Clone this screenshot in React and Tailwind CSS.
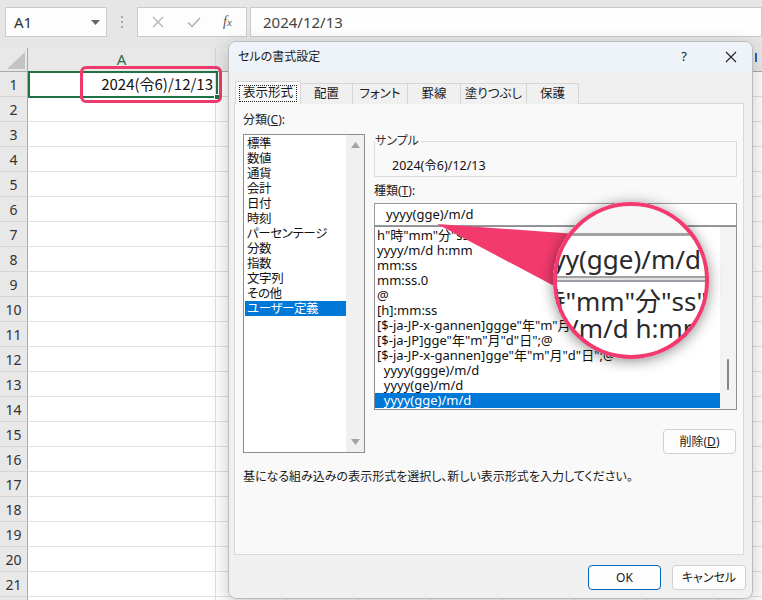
import React from "react";

const ui = "font-['Noto_Sans','Noto_Sans_CJK_JP',sans-serif] [font-feature-settings:'palt']";

const categories = [
  "標準",
  "数値",
  "通貨",
  "会計",
  "日付",
  "時刻",
  "パーセンテージ",
  "分数",
  "指数",
  "文字列",
  "その他",
  "ユーザー定義",
];

const formats = [
  'h"時"mm"分"ss"秒"',
  "yyyy/m/d h:mm",
  "mm:ss",
  "mm:ss.0",
  "@",
  "[h]:mm:ss",
  '[$-ja-JP-x-gannen]ggge"年"m"月"d"日";@',
  '[$-ja-JP]gge"年"m"月"d"日";@',
  '[$-ja-JP-x-gannen]gge"年"m"月"d"日";@',
  "  yyyy(ggge)/m/d",
  "  yyyy(ge)/m/d",
  "  yyyy(gge)/m/d",
];

const tabs = [
  { label: "表示形式", w: "w-[66px]" },
  { label: "配置", w: "w-[52px]" },
  { label: "フォント", w: "w-[55px]" },
  { label: "罫線", w: "w-[53px]" },
  { label: "塗りつぶし", w: "w-[66px]" },
  { label: "保護", w: "w-[52px]" },
];

const rows = Array.from({ length: 22 }, (_, i) => i + 1);
const colWidths = ["w-[188px]", "w-[72px]", "w-[72px]", "w-[72px]", "w-[72px]", "w-[72px]", "w-[72px]", "w-[72px]", "w-[72px]"];

function FormulaBar() {
  return (
    <div className="h-[48px] bg-[#e6e6e6] flex items-start pt-[7px] shrink-0">
      <div className="ml-[5px] w-[102px] h-[30px] bg-[#fdfdfd] border border-[#cacaca] flex items-center justify-between pl-[8px] pr-[6px]">
        <span className="text-[15px] text-[#333] font-['Noto_Sans',sans-serif]">A1</span>
        <svg width="9" height="5" viewBox="0 0 9 5">
          <path d="M0 0 L9 0 L4.5 5 Z" fill="#666" />
        </svg>
      </div>
      <div className="ml-[13px] w-[4px] h-[30px] flex flex-col items-center justify-center gap-[3px]">
        <span className="w-[2px] h-[2px] bg-[#a8a8a8]" />
        <span className="w-[2px] h-[2px] bg-[#a8a8a8]" />
        <span className="w-[2px] h-[2px] bg-[#a8a8a8]" />
      </div>
      <div className="ml-[13px] w-[110px] h-[30px] bg-[#fdfdfd] border border-[#cacaca] flex items-center pl-[13px] gap-[22px]">
        <svg width="14" height="14" viewBox="0 0 14 14">
          <path d="M2 2 L12 12 M12 2 L2 12" stroke="#b4b4b4" strokeWidth="1.3" />
        </svg>
        <svg width="14" height="14" viewBox="0 0 14 14">
          <path d="M1 7.5 L5 11.5 L13 3" stroke="#b4b4b4" strokeWidth="1.6" fill="none" />
        </svg>
        <span className="text-[14px] italic text-[#555] font-['Liberation_Serif',serif] leading-none">
          f<span className="text-[11px]">x</span>
        </span>
      </div>
      <div className="ml-[3px] flex-1 h-[30px] bg-[#fefefe] border border-[#cacaca] flex items-center pl-[12px]">
        <span className="text-[15px] text-[#444] font-['Noto_Sans',sans-serif]">2024/12/13</span>
      </div>
    </div>
  );
}

function Sheet() {
  return (
    <div className="flex flex-col font-['Noto_Sans',sans-serif]">
      <div className="flex h-[24px] bg-[#e8e8e8] border-b border-[#a9a9a9]">
        <div className="w-[28px] shrink-0 border-r border-[#a9a9a9] relative">
          <svg className="absolute right-[2px] bottom-[2px]" width="18" height="17" viewBox="0 0 18 17">
            <path d="M18 0 L18 17 L0 17 Z" fill="#c3c3c3" />
          </svg>
        </div>
        {colWidths.map((w, i) => (
          <div key={i} className={`${w} shrink-0 border-r border-[#d4d4d4] flex items-center justify-center text-[15px] text-[#2f6a48]`}>
            {i === 0 ? "A" : ""}
          </div>
        ))}
      </div>
      {rows.map((r) => (
        <div key={r} className="flex h-[25px]">
          <div className="w-[28px] shrink-0 bg-[#e8e8e8] border-r border-b border-r-[#a9a9a9] border-b-[#d4d4d4] flex items-center justify-center text-[14px] text-[#333]">
            {r}
          </div>
          {colWidths.map((w, i) => (
            <div key={i} className={`${w} shrink-0 border-r border-b border-[#e1e1e1]`} />
          ))}
        </div>
      ))}
    </div>
  );
}

function SelectedCell() {
  return (
    <>
      <div className="absolute left-[28px] top-[71px] w-[190px] h-[27px] border-2 border-[#217346] flex items-center justify-end pr-[3px]">
        <span className="text-[15px] text-[#111] font-['Noto_Sans_CJK_JP',sans-serif]">2024(令6)/12/13</span>
        <span className="absolute -right-[4px] -bottom-[4px] w-[6px] h-[6px] bg-[#217346] border border-white" />
      </div>
      <div className="absolute left-[80px] top-[66px] w-[142px] h-[37px] border-[3px] border-[#ef3a6c] rounded-[6px]" />
    </>
  );
}

function Button({ children, primary, className = "" }) {
  return (
    <div
      className={`h-[25px] bg-[#fdfdfd] rounded-[4px] border flex items-center justify-center text-[12px] text-[#1a1a1a] ${
        primary ? "border-[#0067c0]" : "border-[#d0d0d0]"
      } ${className}`}
    >
      {children}
    </div>
  );
}

function Dialog() {
  return (
    <div className={`absolute left-[228px] top-[41px] w-[525px] h-[558px] rounded-[8px] bg-[#f0f0f0] border border-[#bcbcbc] shadow-[0_6px_20px_rgba(0,0,0,0.22)] overflow-hidden flex flex-col ${ui}`}>
      <div className="h-[30px] bg-[#eef2f9] flex items-center pl-[9px] pr-[15px] shrink-0">
        <span className="text-[12px] text-[#1a1a1a] flex-1">セルの書式設定</span>
        <span className="text-[13px] text-[#222] mr-[38px]">?</span>
        <svg width="12" height="12" viewBox="0 0 12 12">
          <path d="M1 1 L11 11 M11 1 L1 11" stroke="#222" strokeWidth="1.1" />
        </svg>
      </div>

      <div className="flex flex-col pl-[5px] pr-[8px] pt-[9px]">
        {/* tabs */}
        <div className="flex h-[23px] items-end pl-[1px] relative z-10">
          {tabs.map((t, i) =>
            i === 0 ? (
              <div key={t.label} className={`${t.w} h-[23px] bg-[#f9f9f9] border border-b-0 border-[#d6d6d6] flex items-center justify-center`}>
                <span className="border border-dotted border-[#222] px-[3px] h-[17px] flex items-center text-[12.5px] text-[#1a1a1a]">
                  {t.label}
                </span>
              </div>
            ) : (
              <div key={t.label} className={`${t.w} h-[21px] bg-[#f0f0f0] border border-l-0 border-b-0 border-[#d6d6d6] flex items-center justify-center text-[12.5px] text-[#1a1a1a]`}>
                {t.label}
              </div>
            )
          )}
        </div>

        {/* panel */}
        <div className="-mt-px h-[452px] bg-[#f9f9f9] border border-[#d9d9d9] pl-[8px] pt-[8px] flex flex-col">
          <div className="flex">
            {/* category column */}
            <div className="w-[122px] flex flex-col">
              <div className="h-[16px] leading-[16px] text-[12px] text-[#1a1a1a]">
                分類(<span className="underline">C</span>):
              </div>
              <div className="mt-[6px] h-[319px] bg-white border border-[#8d8d96] flex">
                <div className="flex-1 flex flex-col pt-px pl-px">
                  {categories.map((c, i) => (
                    <div
                      key={c}
                      className={`h-[15px] leading-[15px] pl-[2px] text-[12.5px] tracking-[-0.4px] ${
                        i === categories.length - 1 ? "bg-[#0078d7] text-white" : "text-[#111]"
                      }`}
                    >
                      {c}
                    </div>
                  ))}
                </div>
                <div className="w-[18px] bg-[#f0f0f0] flex flex-col items-center justify-between py-[7px]">
                  <svg width="9" height="6" viewBox="0 0 9 6">
                    <path d="M0 6 L4.5 0 L9 6 Z" fill="#a3a3a3" />
                  </svg>
                  <svg width="9" height="6" viewBox="0 0 9 6">
                    <path d="M0 0 L9 0 L4.5 6 Z" fill="#a3a3a3" />
                  </svg>
                </div>
              </div>
            </div>

            {/* right column */}
            <div className="ml-[9px] w-[363px] flex flex-col">
              <div className="mt-[29px] h-[36px] border border-[#dcdcdc] relative pl-[17px] pt-[10px]">
                <span className="absolute -top-[9px] left-0 bg-[#f9f9f9] pr-[2px] text-[12px] leading-[16px] text-[#333]">サンプル</span>
                <span className="text-[12.5px] leading-[18px] text-[#111]">2024(令6)/12/13</span>
              </div>
              <div className="mt-[6px] h-[16px] leading-[16px] text-[12px] text-[#1a1a1a]">
                種類(<span className="underline">T</span>):
              </div>
              <div className="mt-[4px] h-[23px] bg-white border border-[#9a9a9a] flex items-center pl-[11px] text-[13px] text-[#111] whitespace-pre">
                yyyy(gge)/m/d
              </div>
              <div className="h-[184px] bg-white border border-[#8d8d96] flex">
                <div className="flex-1 flex flex-col pt-px">
                  {formats.map((f, i) => (
                    <div
                      key={f}
                      className={`h-[15px] leading-[15px] pl-[2px] text-[13px] whitespace-pre ${
                        i === formats.length - 1 ? "bg-[#0078d7] text-white" : "text-[#111]"
                      }`}
                    >
                      {f}
                    </div>
                  ))}
                </div>
                <div className="w-[16px] bg-[#f3f3f3] relative">
                  <span className="absolute left-[7px] top-[132px] w-[2px] h-[31px] rounded-full bg-[#858585]" />
                </div>
              </div>
              <Button className="mt-[19px] self-end mr-px w-[73px] h-[24px]">
                削除(<span className="underline">D</span>)
              </Button>
            </div>
          </div>
          <div className="mt-[15px] h-[16px] leading-[16px] text-[12px] text-[#1a1a1a]">
            基になる組み込みの表示形式を選択し、新しい表示形式を入力してください。
          </div>
        </div>

        {/* buttons */}
        <div className="mt-[10px] flex justify-end gap-[11px] -mr-[2px]">
          <Button primary className="w-[73px]">OK</Button>
          <Button className="w-[74px]">キャンセル</Button>
        </div>
      </div>
    </div>
  );
}

function Magnifier() {
  return (
    <>
      <svg className="absolute left-0 top-0 pointer-events-none" width="762" height="600" viewBox="0 0 762 600">
        <polygon points="437,224 590,235 590,305" fill="#f23a6e" />
      </svg>
      <div className={`absolute left-[553px] top-[202px] w-[156px] h-[157px] rounded-full overflow-hidden bg-white shadow-[0_2px_14px_rgba(0,0,0,0.45)] ${ui}`}>
        <div className="absolute left-0 top-0 w-full h-[31px] bg-[#f7f7f7]" />
        <div className="absolute left-0 top-[31px] w-full h-[3px] bg-[#a3a3a3]" />
        <div className="absolute -left-[27px] top-[39px] text-[26px] leading-[36px] text-[#2a2a2a] whitespace-pre">
          yyyy(gge)/m/d
        </div>
        <div className="absolute left-0 top-[74px] w-full h-[2px] bg-[#a3a3a3]" />
        <div className="absolute left-0 top-[76px] w-full h-[2px] bg-[#e2e2e2]" />
        <div className="absolute left-0 top-[78px] w-full h-[2px] bg-[#9b9ba3]" />
        <div className="absolute -left-[40px] top-[83px] text-[26px] leading-[32px] text-[#2a2a2a] whitespace-pre">
          h"時"mm"分"ss"秒"
        </div>
        <div className="absolute -left-[37px] top-[110px] text-[26px] leading-[32px] text-[#2a2a2a] whitespace-pre">
          yyyy/m/d h:mm
        </div>
      </div>
      <div className="absolute left-[553px] top-[202px] w-[156px] h-[157px] rounded-full border-[4px] border-[#f23a6e]" />
    </>
  );
}

export default function App() {
  return (
    <div className="relative w-[762px] h-[600px] overflow-hidden bg-white">
      <FormulaBar />
      <Sheet />
      <SelectedCell />
      <span className="absolute left-[755px] top-[53px] w-[2px] h-[9px] bg-[#2a66c8]" />
      <Dialog />
      <Magnifier />
    </div>
  );
}
